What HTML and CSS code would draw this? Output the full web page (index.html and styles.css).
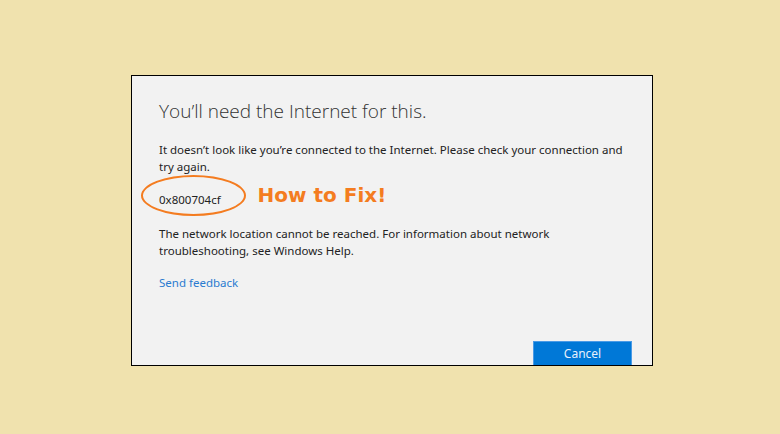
FILE: index.html
```html
<!DOCTYPE html>
<html>
<head>
<meta charset="utf-8">
<link rel="stylesheet" href="styles.css">
</head>
<body>
<div class="dialog">
  <h1 class="title">You’ll need the Internet for this.</h1>
  <p class="text">It doesn’t look like you’re connected to the Internet. Please check your connection and try again.</p>
  <div class="code-row">
    <span class="code">0x800704cf</span>
    <span class="ellipse"></span>
    <span class="fix">How to Fix!</span>
  </div>
  <p class="text text-after">The network location cannot be reached. For information about network troubleshooting, see Windows Help.</p>
  <a class="link">Send feedback</a>
  <div class="actions">
    <button class="btn">Cancel</button>
  </div>
</div>
</body>
</html>
```
FILE: styles.css
```css
html, body { margin: 0; padding: 0; }
body {
  background: #f0e2ae;
  width: 780px;
  height: 434px;
  overflow: hidden;
  font-family: "Noto Sans", "Open Sans", sans-serif;
}
.dialog {
  box-sizing: border-box;
  margin: 75px 0 0 131px;
  width: 522px;
  height: 291px;
  background: #f2f2f2;
  border: 1.5px solid #000;
  padding: 21px 0 0 27px;
  display: flex;
  flex-direction: column;
}
.title {
  margin: 0;
  font-weight: 300;
  font-size: 19px;
  color: #333;
  font-family: "Open Sans", "Noto Sans", sans-serif;
  line-height: 28px;
}
.text {
  margin: 16px 0 0 0;
  width: 475px;
  font-size: 11.5px;
  line-height: 17px;
  color: #222;
}
.text-after { margin-top: 17px; }
.code-row {
  position: relative;
  margin-top: 15px;
  height: 18px;
  display: flex;
  align-items: center;
}
.code { font-size: 11.5px; color: #222; }
.ellipse {
  position: absolute;
  left: -18px;
  top: -15px;
  width: 101px;
  height: 37px;
  border: 2px solid #f47c20;
  border-radius: 50%;
}
.fix {
  margin-left: 37px;
  font-family: "DejaVu Sans", sans-serif;
  font-weight: bold;
  font-size: 20px;
  color: #f47c20;
  position: relative;
  top: -4px;
}
.link {
  margin-top: 16px;
  font-size: 11.5px;
  color: #2a7bd0;
}
.actions {
  margin-top: auto;
  display: flex;
  justify-content: flex-end;
  padding-right: 20px;
}
.btn {
  width: 99px;
  height: 24px;
  border: 1px solid #4a9ae6;
  border-bottom: 0;
  background: #0078d7;
  color: #e8f0fb;
  font-family: "Noto Sans", sans-serif;
  font-size: 12px;
  padding: 0 0 1px 0;
}
```
